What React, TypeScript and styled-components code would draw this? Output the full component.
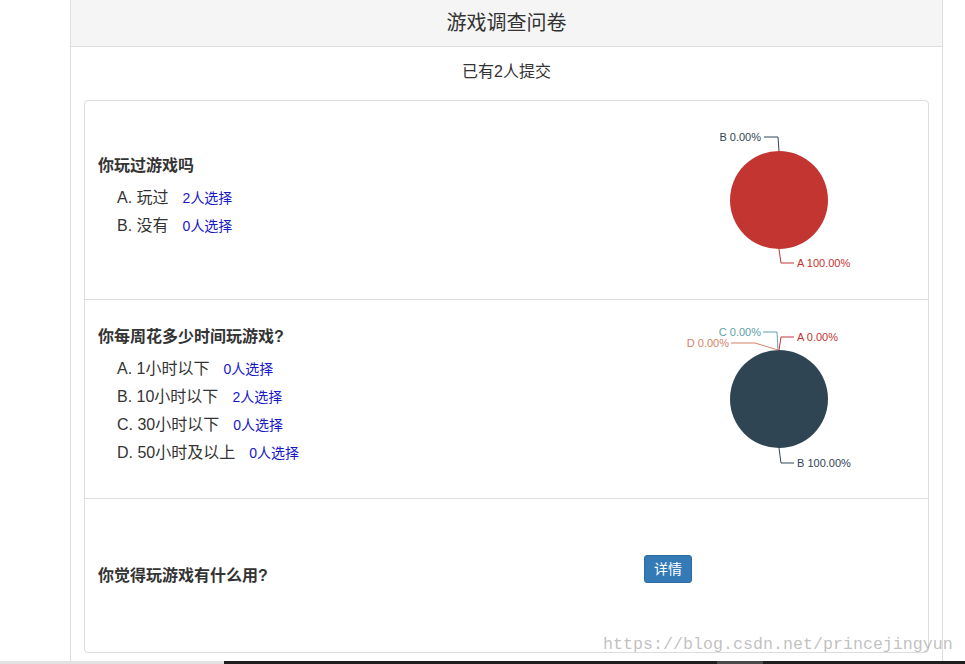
import React from "react";
import styled, { createGlobalStyle } from "styled-components";

const GlobalStyle = createGlobalStyle`
  html, body { margin: 0; padding: 0; background: #fff; }
  body {
    font-family: "Liberation Sans", "Noto Sans CJK SC", sans-serif;
    color: #333;
  }
`;

const Page = styled.div`
  position: relative;
  width: 965px;
  height: 664px;
  display: flex;
  flex-direction: column;
  overflow: hidden;
`;

const Main = styled.div`
  flex: 1;
  min-height: 0;
  padding-left: 70px;
  overflow: hidden;
`;

const Panel = styled.div`
  width: 873px;
  box-sizing: border-box;
  margin-top: -1px;
  border: 1px solid #ddd;
  background: #fff;
`;

const PanelHeading = styled.div`
  height: 46px;
  background: #f5f5f5;
  border-bottom: 1px solid #ddd;
  display: flex;
  align-items: center;
  justify-content: center;
`;

const PanelTitle = styled.h3`
  margin: 0;
  font-size: 20px;
  font-weight: normal;
  line-height: 24px;
  color: #333;
`;

const PanelBody = styled.div`
  padding: 15px 13px 20px 13px;
`;

const Summary = styled.p`
  margin: 0 0 18px;
  text-align: center;
  font-size: 16px;
  line-height: 20px;
`;

const Card = styled.div`
  border: 1px solid #ddd;
  border-radius: 4px;
`;

const Item = styled.div<{ $h: number; $last?: boolean }>`
  height: ${(p) => p.$h}px;
  display: flex;
  align-items: center;
  padding-left: 13px;
  border-bottom: ${(p) => (p.$last ? "none" : "1px solid #ddd")};
`;

const TextBlock = styled.div`
  flex: 1;
  padding-bottom: 5px;
`;

const QTitle = styled.div<{ $w?: number }>`
  font-size: 16px;
  font-weight: bold;
  line-height: 22px;
  margin-bottom: 7px;
  color: #333;
  ${(p) => (p.$w ? `width: ${p.$w}px; margin-bottom: 0; flex: none;` : "")}
`;

const OptionList = styled.ul`
  list-style: none;
  margin: 0;
  padding: 0 0 0 19px;
`;

const Option = styled.li`
  font-size: 16px;
  line-height: 28px;
  height: 28px;
  color: #333;
  white-space: nowrap;
`;

const Count = styled.span`
  margin-left: 14px;
  font-size: 14px;
  color: #1818c8;
`;

const ChartBox = styled.div`
  flex: none;
  width: 240px;
  height: 198px;
  margin-right: 29px;
`;

const DetailButton = styled.button`
  flex: none;
  height: 28px;
  margin-bottom: 14px;
  padding: 0 9px;
  font-family: inherit;
  font-size: 14px;
  line-height: 26px;
  color: #fff;
  background: #337ab7;
  border: 1px solid #2e6da4;
  border-radius: 3px;
`;

const Watermark = styled.div`
  position: absolute;
  left: 603px;
  top: 633px;
  font-family: "Liberation Mono", monospace;
  font-size: 16.67px;
  line-height: 24px;
  color: rgba(140, 140, 140, 0.55);
  white-space: nowrap;
  pointer-events: none;
`;

const BottomStrip = styled.div`
  flex: none;
  height: 3px;
  display: flex;
`;

const StripPart = styled.div<{ $w?: number; $c: string }>`
  background: ${(p) => p.$c};
  ${(p) => (p.$w ? `width: ${p.$w}px; flex: none;` : "flex: 1;")}
`;

const COLORS = { A: "#c23531", B: "#2f4554", C: "#61a0a8", D: "#d48265" };

type Label = {
  text: string;
  color: string;
  points: string;
  x: number;
  y: number;
  anchor: "start" | "end";
};

const Pie: React.FC<{ fill: string; labels: Label[] }> = ({ fill, labels }) => (
  <svg width="240" height="198" viewBox="0 0 240 198">
    <circle cx="120" cy="99" r="49" fill={fill} />
    {labels.map((l) => (
      <g key={l.text}>
        <polyline points={l.points} fill="none" stroke={l.color} strokeWidth="1" />
        <text
          x={l.x}
          y={l.y}
          fill={l.color}
          fontSize="11"
          fontFamily="Liberation Sans, sans-serif"
          textAnchor={l.anchor}
          dominantBaseline="central"
        >
          {l.text}
        </text>
      </g>
    ))}
  </svg>
);

const chart1: Label[] = [
  { text: "B 0.00%", color: COLORS.B, points: "105,36 119,36 120,50", x: 102, y: 36, anchor: "end" },
  { text: "A 100.00%", color: COLORS.A, points: "120,148 122,162 135,162", x: 138, y: 162, anchor: "start" },
];

const chart2: Label[] = [
  { text: "C 0.00%", color: COLORS.C, points: "104,32 118,32 119,50", x: 102, y: 32, anchor: "end" },
  { text: "A 0.00%", color: COLORS.A, points: "120,50 122,37 135,37", x: 138, y: 37, anchor: "start" },
  { text: "D 0.00%", color: COLORS.D, points: "72,43 96,43 119,50", x: 70, y: 43, anchor: "end" },
  { text: "B 100.00%", color: COLORS.B, points: "120,148 122,163 135,163", x: 138, y: 163, anchor: "start" },
];

type Q = { title: string; options: { label: string; count: number }[] };

const q1: Q = {
  title: "你玩过游戏吗",
  options: [
    { label: "A. 玩过", count: 2 },
    { label: "B. 没有", count: 0 },
  ],
};

const q2: Q = {
  title: "你每周花多少时间玩游戏?",
  options: [
    { label: "A. 1小时以下", count: 0 },
    { label: "B. 10小时以下", count: 2 },
    { label: "C. 30小时以下", count: 0 },
    { label: "D. 50小时及以上", count: 0 },
  ],
};

const Question: React.FC<{ q: Q }> = ({ q }) => (
  <TextBlock>
    <QTitle>{q.title}</QTitle>
    <OptionList>
      {q.options.map((o) => (
        <Option key={o.label}>
          {o.label}
          <Count>{o.count}人选择</Count>
        </Option>
      ))}
    </OptionList>
  </TextBlock>
);

export default function App() {
  return (
    <>
      <GlobalStyle />
      <Page>
        <Main>
          <Panel>
            <PanelHeading>
              <PanelTitle>游戏调查问卷</PanelTitle>
            </PanelHeading>
            <PanelBody>
              <Summary>已有2人提交</Summary>
              <Card>
                <Item $h={198}>
                  <Question q={q1} />
                  <ChartBox>
                    <Pie fill={COLORS.A} labels={chart1} />
                  </ChartBox>
                </Item>
                <Item $h={198}>
                  <Question q={q2} />
                  <ChartBox>
                    <Pie fill={COLORS.B} labels={chart2} />
                  </ChartBox>
                </Item>
                <Item $h={153} $last>
                  <QTitle $w={546}>你觉得玩游戏有什么用?</QTitle>
                  <DetailButton>详情</DetailButton>
                </Item>
              </Card>
            </PanelBody>
          </Panel>
        </Main>
        <BottomStrip>
          <StripPart $w={224} $c="#e2e2e2" />
          <StripPart $w={493} $c="#1f1f1f" />
          <StripPart $w={46} $c="#4a4a4a" />
          <StripPart $c="#1f1f1f" />
        </BottomStrip>
        <Watermark>https://blog.csdn.net/princejingyun</Watermark>
      </Page>
    </>
  );
}
